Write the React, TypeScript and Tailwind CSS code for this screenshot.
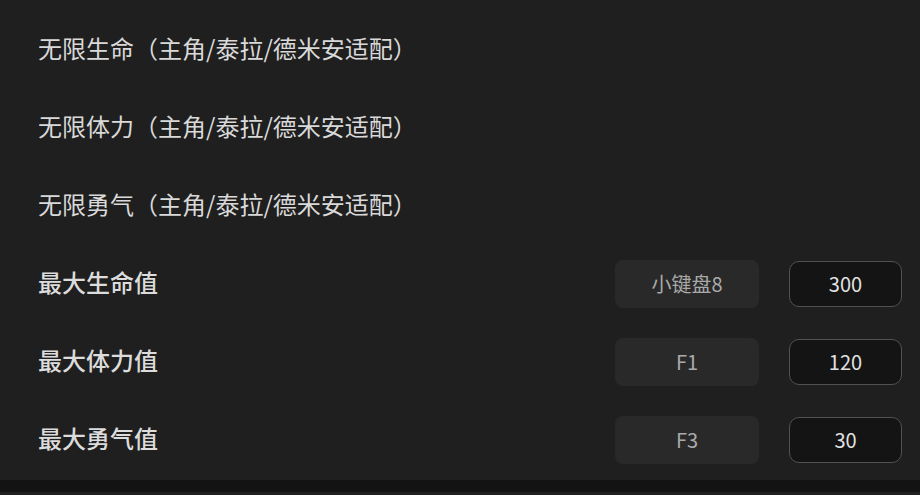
import React from "react";

const toggles = [
  { name: "无限生命（主角/泰拉/德米安适配）" },
  { name: "无限体力（主角/泰拉/德米安适配）" },
  { name: "无限勇气（主角/泰拉/德米安适配）" },
];

const values = [
  { name: "最大生命值", hotkey: "小键盘8", value: "300" },
  { name: "最大体力值", hotkey: "F1", value: "120" },
  { name: "最大勇气值", hotkey: "F3", value: "30" },
];

const App = () => {
  return (
    <div
      className="w-[920px] h-[495px] bg-[#1f1f1f] flex flex-col overflow-hidden"
      style={{ fontFamily: '"Noto Sans CJK SC", "Noto Sans", sans-serif' }}
    >
      <div className="pt-[11px] pl-[38px] pr-[18px] flex flex-col">
        {toggles.map((item) => (
          <div key={item.name} className="h-[78px] flex items-center">
            <span className="pb-[4px] text-[24px] text-[#d9d9d9]">{item.name}</span>
          </div>
        ))}
        {values.map((item) => (
          <div key={item.name} className="h-[78px] flex items-center">
            <span className="pb-[4px] text-[24px] font-medium text-[#dcdcdc] flex-1">
              {item.name}
            </span>
            <div className="w-[144px] h-[48px] rounded-[8px] bg-[#292929] flex items-center justify-center text-[20px] text-[#a9a9a9]">
              {item.hotkey}
            </div>
            <div className="ml-[30px] w-[113px] h-[46px] rounded-[10px] border border-[#525252] bg-[#141414] flex items-center justify-center text-[20px] text-[#e2e2e2]">
              {item.value}
            </div>
          </div>
        ))}
      </div>
      <div className="mt-[1px] h-[12px] bg-[#131313]" />
    </div>
  );
};

export default App;
